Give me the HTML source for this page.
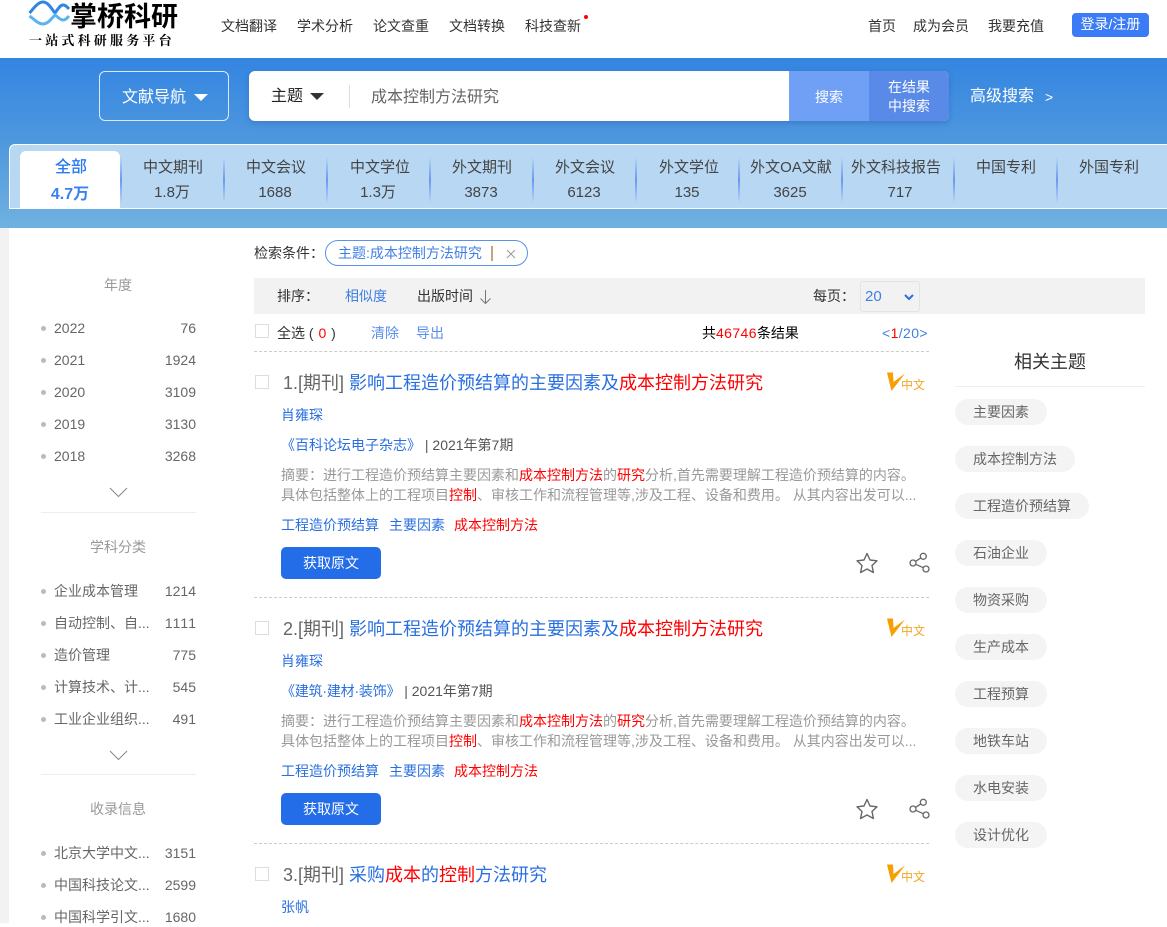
<!DOCTYPE html>
<html lang="zh"><head><meta charset="utf-8"><title>掌桥科研</title>
<style>
html,body{margin:0;padding:0}
body{width:1167px;height:923px;position:relative;overflow:hidden;background:#fff;font-family:"Liberation Sans","Noto Sans CJK SC",sans-serif;font-size:14px;color:#333;font-kerning:none}
.a,.t{position:absolute}
.t{white-space:nowrap;transform:translateY(-50%);line-height:20px}
.c{transform:translate(-50%,-50%);text-align:center}
.r{transform:translate(-100%,-50%)}
.b{color:#2a6fe0}.red{color:#f00}
.sep{position:absolute;top:157px;width:2px;height:46px;background:linear-gradient(180deg,#b7d7f3,#6b98f0 50%,#b7d7f3)}
.tab{font-size:15px;color:#444}
.num{font-size:15px;color:#444}
.dot{position:absolute;left:41px;width:5px;height:5px;border-radius:50%;background:#bbb}
.sd{color:#666;font-size:14px}
.hr{position:absolute;left:41px;width:155px;height:1px;background:#eee}
.pill{position:absolute;left:955px;height:26px;line-height:26px;border-radius:13px;background:#f4f4f4;color:#666;font-size:14px;padding:0 18px;white-space:nowrap}
.cb{position:absolute;left:255px;width:12px;height:12px;border:1px solid #ddd}
.dash{position:absolute;left:254px;width:675px;border-top:1px dashed #ccc}
.btn{position:absolute;left:281px;width:100px;height:32px;line-height:32px;background:#236de8;border-radius:5px;color:#fff;text-align:center;font-size:14px}
.title{font-size:18px;color:#666}
</style></head><body>

<!-- logo -->
<svg class="a" style="left:26px;top:0" width="46" height="27" viewBox="0 0 46 27" fill="none">
<path d="M3.500 13C8 8 12 2 17 2s8 6 12 11c3-4 5-8 8-8s4 2 6 4" stroke="#2f86e4" stroke-width="3"/>
<path d="M3.500 16C8 19 12 24 17 24s8-5 12-9c3 2 5 5 8 5s4-2 6-4" stroke="#5cb4ee" stroke-width="3"/>
</svg>
<div class="t" style="left:70px;top:17px;font-size:27px;line-height:30px;font-weight:bold;color:#000">掌桥科研</div>
<div class="t" style="left:29px;top:41px;font-size:13px;letter-spacing:3.200px;font-weight:bold;color:#000;font-family:'Liberation Serif','Noto Serif CJK SC',serif">一站式科研服务平台</div>

<!-- top nav -->
<div class="t" style="left:221px;top:26px">文档翻译</div>
<div class="t" style="left:297px;top:26px">学术分析</div>
<div class="t" style="left:373px;top:26px">论文查重</div>
<div class="t" style="left:449px;top:26px">文档转换</div>
<div class="t" style="left:525px;top:26px">科技查新</div>
<div class="a" style="left:584px;top:15px;width:4px;height:4px;border-radius:50%;background:#f00"></div>
<div class="t" style="left:868px;top:26px">首页</div>
<div class="t" style="left:913px;top:26px">成为会员</div>
<div class="t" style="left:988px;top:26px">我要充值</div>
<div class="a" style="left:1072px;top:13px;width:77px;height:24px;line-height:23px;background:#3b7bf6;border-radius:4px;color:#fff;text-align:center;font-size:14px">登录/注册</div>

<!-- banner -->
<div class="a" style="left:0;top:58px;width:1167px;height:170px;background:linear-gradient(180deg,#3485e2 0%,#4f98de 50%,#6fb1e0 100%)"></div>
<div class="a" style="left:99px;top:71px;width:128px;height:48px;border:1px solid #dbe9fa;border-radius:6px"></div>
<div class="t" style="left:122px;top:98px;font-size:16px;color:#fff">文献导航</div>
<div class="a" style="left:194px;top:94px;width:0;height:0;border-left:7px solid transparent;border-right:7px solid transparent;border-top:7px solid #fff"></div>

<div class="a" style="left:249px;top:71px;width:700px;height:50px;background:#fff;border-radius:6px;box-shadow:0 2px 6px rgba(30,70,140,.3)"></div>
<div class="t" style="left:271px;top:97px;font-size:16px;color:#222">主题</div>
<div class="a" style="left:310px;top:93px;width:0;height:0;border-left:7px solid transparent;border-right:7px solid transparent;border-top:7px solid #333"></div>
<div class="a" style="left:349px;top:85px;width:1px;height:23px;background:#ddd"></div>
<div class="t" style="left:371px;top:98px;font-size:16px;color:#666">成本控制方法研究</div>
<div class="a" style="left:789px;top:71px;width:80px;height:50px;background:#70a0f5"></div>
<div class="a" style="left:869px;top:71px;width:80px;height:50px;background:#5a8ae8;border-radius:0 6px 6px 0"></div>
<div class="t c" style="left:829px;top:97px;color:#fff">搜索</div>
<div class="t c" style="left:909px;top:87px;color:#fff">在结果</div>
<div class="t c" style="left:909px;top:106px;color:#fff">中搜索</div>
<div class="t" style="left:970px;top:97px;font-size:16px;color:#fff">高级搜索</div>
<div class="t" style="left:1045px;top:97px;font-size:14px;color:#fff">&gt;</div>

<!-- tabs -->
<div class="a" style="left:9px;top:144px;width:1158px;height:63px;background:#b7d7f3;border:1px solid #fff;border-right:0;border-radius:6px 0 0 0;box-sizing:content-box"></div>
<div class="a" style="left:20px;top:151px;width:100px;height:58px;background:#fff;border-radius:6px 6px 0 0"></div>
<div class="t c" style="left:71px;top:168px;font-size:16px;font-weight:500;color:#2a7af0">全部</div>
<div class="t c" style="left:70px;top:195px;font-size:16px;font-weight:bold;color:#3a80f0">4.7万</div>
<div class="sep" style="left:120px"></div><div class="sep" style="left:223px"></div><div class="sep" style="left:326px"></div><div class="sep" style="left:429px"></div><div class="sep" style="left:532px"></div><div class="sep" style="left:635px"></div><div class="sep" style="left:738px"></div><div class="sep" style="left:841px"></div><div class="sep" style="left:953px"></div><div class="sep" style="left:1056px"></div>
<div class="t c tab" style="left:173px;top:168px">中文期刊</div><div class="t c num" style="left:172px;top:193px">1.8万</div>
<div class="t c tab" style="left:276px;top:168px">中文会议</div><div class="t c num" style="left:275px;top:193px">1688</div>
<div class="t c tab" style="left:380px;top:168px">中文学位</div><div class="t c num" style="left:378px;top:193px">1.3万</div>
<div class="t c tab" style="left:482px;top:168px">外文期刊</div><div class="t c num" style="left:481px;top:193px">3873</div>
<div class="t c tab" style="left:585px;top:168px">外文会议</div><div class="t c num" style="left:584px;top:193px">6123</div>
<div class="t c tab" style="left:689px;top:168px">外文学位</div><div class="t c num" style="left:687px;top:193px">135</div>
<div class="t c tab" style="left:791px;top:168px">外文OA文献</div><div class="t c num" style="left:790px;top:193px">3625</div>
<div class="t c tab" style="left:896px;top:168px">外文科技报告</div><div class="t c num" style="left:900px;top:193px">717</div>
<div class="t c tab" style="left:1006px;top:168px">中国专利</div>
<div class="t c tab" style="left:1109px;top:168px">外国专利</div>

<!-- left strip -->
<div class="a" style="left:0;top:228px;width:9px;height:695px;background:#f2f2f2"></div>

<!-- sidebar -->
<div class="t c" style="left:118px;top:285px;font-size:14px;color:#999">年度</div>
<div class="dot" style="top:326px"></div><div class="t sd" style="left:54px;top:328px">2022</div><div class="t sd r" style="left:196px;top:328px">76</div>
<div class="dot" style="top:358px"></div><div class="t sd" style="left:54px;top:360px">2021</div><div class="t sd r" style="left:196px;top:360px">1924</div>
<div class="dot" style="top:390px"></div><div class="t sd" style="left:54px;top:392px">2020</div><div class="t sd r" style="left:196px;top:392px">3109</div>
<div class="dot" style="top:422px"></div><div class="t sd" style="left:54px;top:424px">2019</div><div class="t sd r" style="left:196px;top:424px">3130</div>
<div class="dot" style="top:454px"></div><div class="t sd" style="left:54px;top:456px">2018</div><div class="t sd r" style="left:196px;top:456px">3268</div>
<svg class="a" style="left:109px;top:487px" width="19" height="11" viewBox="0 0 19 11" fill="none"><path d="M1 1l8.500 8.500L18 1" stroke="#888" stroke-width="1"/></svg>
<div class="hr" style="top:512px"></div>

<div class="t c" style="left:118px;top:547px;font-size:14px;color:#999">学科分类</div>
<div class="dot" style="top:589px"></div><div class="t sd" style="left:54px;top:591px">企业成本管理</div><div class="t sd r" style="left:196px;top:591px">1214</div>
<div class="dot" style="top:621px"></div><div class="t sd" style="left:54px;top:623px">自动控制、自...</div><div class="t sd r" style="left:196px;top:623px">1111</div>
<div class="dot" style="top:653px"></div><div class="t sd" style="left:54px;top:655px">造价管理</div><div class="t sd r" style="left:196px;top:655px">775</div>
<div class="dot" style="top:685px"></div><div class="t sd" style="left:54px;top:687px">计算技术、计...</div><div class="t sd r" style="left:196px;top:687px">545</div>
<div class="dot" style="top:717px"></div><div class="t sd" style="left:54px;top:719px">工业企业组织...</div><div class="t sd r" style="left:196px;top:719px">491</div>
<svg class="a" style="left:109px;top:750px" width="19" height="11" viewBox="0 0 19 11" fill="none"><path d="M1 1l8.500 8.500L18 1" stroke="#888" stroke-width="1"/></svg>
<div class="hr" style="top:774px"></div>

<div class="t c" style="left:118px;top:809px;font-size:14px;color:#999">收录信息</div>
<div class="dot" style="top:851px"></div><div class="t sd" style="left:54px;top:853px">北京大学中文...</div><div class="t sd r" style="left:196px;top:853px">3151</div>
<div class="dot" style="top:883px"></div><div class="t sd" style="left:54px;top:885px">中国科技论文...</div><div class="t sd r" style="left:196px;top:885px">2599</div>
<div class="dot" style="top:915px"></div><div class="t sd" style="left:54px;top:917px">中国科学引文...</div><div class="t sd r" style="left:196px;top:917px">1680</div>

<!-- conditions -->
<div class="t" style="left:254px;top:253px;font-size:14px;color:#333">检索条件：</div>
<div class="a" style="left:325px;top:240px;width:201px;height:24px;border:1px solid #5b93ea;border-radius:13px"></div>
<div class="t" style="left:338px;top:253px;font-size:14px;color:#3f7fe6">主题:成本控制方法研究</div>
<div class="a" style="left:491px;top:246px;width:2px;height:15px;background:#c9a27a"></div>
<svg class="a" style="left:506px;top:249px" width="10" height="10" viewBox="0 0 10 10"><path d="M1 1l8 8M9 1l-8 8" stroke="#999" stroke-width="1"/></svg>

<!-- sort bar -->
<div class="a" style="left:254px;top:278px;width:891px;height:36px;background:#f2f2f2"></div>
<div class="t" style="left:277px;top:296px;font-size:14px;color:#333">排序：</div>
<div class="t" style="left:345px;top:296px;font-size:14px;color:#3f7fe6">相似度</div>
<div class="t" style="left:417px;top:296px;font-size:14px;color:#333">出版时间</div>
<svg class="a" style="left:479px;top:289px" width="13" height="16" viewBox="0 0 13 16" fill="none"><path d="M6.500 1v13.500M1.500 9.500l5 5 5-5" stroke="#777" stroke-width="1"/></svg>
<div class="t" style="left:813px;top:296px;font-size:14px;color:#333">每页：</div>
<div class="a" style="left:860px;top:281px;width:58px;height:29px;border:1px solid #e4e4e4;border-radius:3px;background:#f2f2f2"></div>
<div class="t" style="left:865px;top:297px;font-size:15px;color:#3f7fe6">20</div>
<svg class="a" style="left:904px;top:294px" width="10" height="7" viewBox="0 0 10 7" fill="none"><path d="M1 1l4 4 4-4" stroke="#2a6fe0" stroke-width="2"/></svg>

<!-- select row -->
<div class="cb" style="top:324px"></div>
<div class="t" style="left:277px;top:333px;font-size:14px;color:#333">全选 ( <span class="red" style="padding:0 1px">0</span> )</div>
<div class="t" style="left:371px;top:333px;font-size:14px;color:#5b8fe8">清除</div>
<div class="t" style="left:416px;top:333px;font-size:14px;color:#5b8fe8">导出</div>
<div class="t" style="left:702px;top:333px;font-size:14px;color:#000">共<span class="red" style="letter-spacing:.4px">46746</span>条结果</div>
<div class="t r" style="left:928px;top:333px;font-size:14px;color:#3f7fe6;letter-spacing:.4px">&lt;<span class="red">1</span>/20&gt;</div>
<div class="dash" style="top:351px"></div>

<!-- result 1 -->
<div class="cb" style="top:375px"></div>
<div class="t title" style="left:283px;top:383px">1.[期刊] <span class="b">影响工程造价预结算的主要因素及</span><span class="red">成本控制方法研究</span></div>
<svg class="a" style="left:887px;top:372px" width="18" height="19" viewBox="0 0 18 19"><path d="M0 .500h6L6.500 10 18 1.500 4.500 19z" fill="#f59f00"/></svg>
<div class="t" style="left:901px;top:385px;font-size:12px;color:#f5a623">中文</div>
<div class="t b" style="left:281px;top:415px;font-size:14px">肖雍琛</div>
<div class="t" style="left:281px;top:445px;font-size:14px;color:#555"><span class="b">《百科论坛电子杂志》</span> | 2021年第7期</div>
<div class="t" style="left:281px;top:475px;font-size:14px;color:#999">摘要：进行工程造价预结算主要因素和<span class="red">成本控制方法</span>的<span class="red">研究</span>分析,首先需要理解工程造价预结算的内容。</div>
<div class="t" style="left:281px;top:495px;font-size:14px;color:#999">具体包括整体上的工程项目<span class="red">控制</span>、审核工作和流程管理等,涉及工程、设备和费用。 从其内容出发可以...</div>
<div class="t b" style="left:281px;top:525px;font-size:14px">工程造价预结算</div>
<div class="t b" style="left:389px;top:525px;font-size:14px">主要因素</div>
<div class="t red" style="left:454px;top:525px;font-size:14px">成本控制方法</div>
<div class="btn" style="top:547px">获取原文</div>
<svg class="a" style="left:856px;top:552px" width="22" height="22" viewBox="0 0 22 22" fill="none"><path d="M11 1.500L14 8l7 .800-5 4.700 1.400 7L11 17l-6.400 3.500 1.400-7-5-4.700L8 8z" stroke="#666" stroke-width="1.400" stroke-linejoin="round"/></svg>
<svg class="a" style="left:908px;top:552px" width="22" height="22" viewBox="0 0 22 22" fill="none"><circle cx="15.300" cy="4.300" r="3" stroke="#666" stroke-width="1.300"/><circle cx="5" cy="11" r="3" stroke="#666" stroke-width="1.300"/><circle cx="18" cy="17" r="3" stroke="#666" stroke-width="1.300"/><path d="M7.500 9.400l5.300-3.500M7.700 12.300l7.600 3.400" stroke="#666" stroke-width="1.300"/></svg>
<div class="dash" style="top:597px"></div>

<!-- result 2 -->
<div class="cb" style="top:621px"></div>
<div class="t title" style="left:283px;top:629px">2.[期刊] <span class="b">影响工程造价预结算的主要因素及</span><span class="red">成本控制方法研究</span></div>
<svg class="a" style="left:887px;top:618px" width="18" height="19" viewBox="0 0 18 19"><path d="M0 .500h6L6.500 10 18 1.500 4.500 19z" fill="#f59f00"/></svg>
<div class="t" style="left:901px;top:631px;font-size:12px;color:#f5a623">中文</div>
<div class="t b" style="left:281px;top:661px;font-size:14px">肖雍琛</div>
<div class="t" style="left:281px;top:691px;font-size:14px;color:#555"><span class="b" style="letter-spacing:-.2px">《建筑·建材·装饰》</span> | 2021年第7期</div>
<div class="t" style="left:281px;top:721px;font-size:14px;color:#999">摘要：进行工程造价预结算主要因素和<span class="red">成本控制方法</span>的<span class="red">研究</span>分析,首先需要理解工程造价预结算的内容。</div>
<div class="t" style="left:281px;top:741px;font-size:14px;color:#999">具体包括整体上的工程项目<span class="red">控制</span>、审核工作和流程管理等,涉及工程、设备和费用。 从其内容出发可以...</div>
<div class="t b" style="left:281px;top:771px;font-size:14px">工程造价预结算</div>
<div class="t b" style="left:389px;top:771px;font-size:14px">主要因素</div>
<div class="t red" style="left:454px;top:771px;font-size:14px">成本控制方法</div>
<div class="btn" style="top:793px">获取原文</div>
<svg class="a" style="left:856px;top:798px" width="22" height="22" viewBox="0 0 22 22" fill="none"><path d="M11 1.500L14 8l7 .800-5 4.700 1.400 7L11 17l-6.400 3.500 1.400-7-5-4.700L8 8z" stroke="#666" stroke-width="1.400" stroke-linejoin="round"/></svg>
<svg class="a" style="left:908px;top:798px" width="22" height="22" viewBox="0 0 22 22" fill="none"><circle cx="15.300" cy="4.300" r="3" stroke="#666" stroke-width="1.300"/><circle cx="5" cy="11" r="3" stroke="#666" stroke-width="1.300"/><circle cx="18" cy="17" r="3" stroke="#666" stroke-width="1.300"/><path d="M7.500 9.400l5.300-3.500M7.700 12.300l7.600 3.400" stroke="#666" stroke-width="1.300"/></svg>
<div class="dash" style="top:843px"></div>

<!-- result 3 -->
<div class="cb" style="top:867px"></div>
<div class="t title" style="left:283px;top:875px">3.[期刊] <span class="b">采购</span><span class="red">成本</span><span class="b">的</span><span class="red">控制</span><span class="b">方法研究</span></div>
<svg class="a" style="left:887px;top:864px" width="18" height="19" viewBox="0 0 18 19"><path d="M0 .500h6L6.500 10 18 1.500 4.500 19z" fill="#f59f00"/></svg>
<div class="t" style="left:901px;top:877px;font-size:12px;color:#f5a623">中文</div>
<div class="t b" style="left:281px;top:907px;font-size:14px">张帆</div>

<!-- related -->
<div class="t c" style="left:1050px;top:362px;font-size:18px;color:#333">相关主题</div>
<div class="a" style="left:955px;top:386px;width:190px;height:1px;background:#eee"></div>
<div class="pill" style="top:399px">主要因素</div>
<div class="pill" style="top:446px">成本控制方法</div>
<div class="pill" style="top:493px">工程造价预结算</div>
<div class="pill" style="top:540px">石油企业</div>
<div class="pill" style="top:587px">物资采购</div>
<div class="pill" style="top:634px">生产成本</div>
<div class="pill" style="top:681px">工程预算</div>
<div class="pill" style="top:728px">地铁车站</div>
<div class="pill" style="top:775px">水电安装</div>
<div class="pill" style="top:822px">设计优化</div>

</body></html>
